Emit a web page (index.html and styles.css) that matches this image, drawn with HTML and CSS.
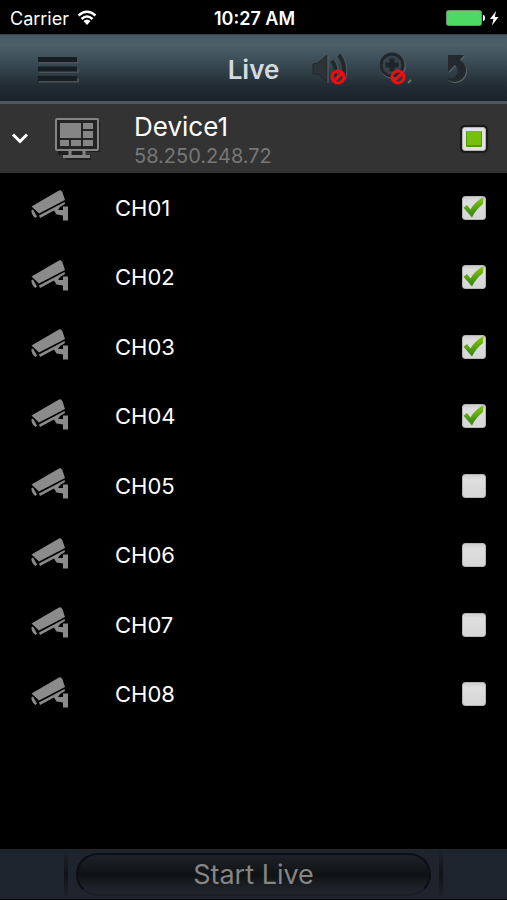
FILE: index.html
```html
<!DOCTYPE html>
<html lang="en">
<head>
    <meta charset="UTF-8">
    <meta name="viewport" content="width=device-width, initial-scale=1.0">
    <title>Live</title>
    <link rel="stylesheet" href="styles.css">
</head>
<body>
    <svg class="defs" aria-hidden="true">
        <defs>
            <linearGradient id="green" x1="0" y1="0" x2="0" y2="1">
                <stop offset="0" stop-color="#8cc811"/>
                <stop offset="1" stop-color="#2f8412"/>
            </linearGradient>
            <symbol id="camera" viewBox="0 0 38 31">
                <path d="M.5 16.500L28 .5Q29.500 -.2 30.500 1L31.500 2.500L34 10L8 23.500Z"/>
                <path d="M.3 20.500L2 19.500L6 26.500L4.500 28Q.8 26 .3 20.500Z"/>
                <path d="M8 25.500L33.500 12L34 14L29 17L27 20H32V16.500H37V30.500H32V25.500L25.500 24.500L23 20.500L9 28Z"/>
            </symbol>
            <symbol id="tick" viewBox="0 0 24 24">
                <path d="M1.500 11.800L5 9L8.500 13.500Q13 5.500 21.500 1L21 8Q14 13.500 10 21.500Z" fill="url(#green)"/>
            </symbol>
            <symbol id="partial" viewBox="0 0 24 24">
                <rect x="4" y="4" width="16" height="16" rx="1" fill="#4d9a12"/>
                <rect x="5" y="4" width="14" height="14" fill="#76bf0c"/>
            </symbol>
            <symbol id="banned" viewBox="0 0 16 16">
                <circle cx="8" cy="8" r="6" fill="none" stroke="#f50d0d" stroke-width="3"/>
                <path d="M4 12L12 4" stroke="#f50d0d" stroke-width="3"/>
            </symbol>
        </defs>
    </svg>

    <div class="status-bar">
        <div class="carrier">
            <span>Carrier</span>
            <svg width="20" height="16" viewBox="0 0 20 16">
                <path d="M1.500 5.500Q10-2 18.500 5.500M4.500 9Q10 4 15.500 9" fill="none" stroke="#fff" stroke-width="2.400"/>
                <path d="M6.500 11Q10 8 13.500 11L10 15Z" fill="#fff"/>
            </svg>
        </div>
        <span class="clock">10:27 AM</span>
        <div class="battery">
            <svg width="53" height="16" viewBox="0 0 53 16">
                <rect x=".5" y=".5" width="35" height="15" rx="2" fill="#4cd964" stroke="#6e8f74"/>
                <path d="M37 5Q39 5 39 8T37 11Z" fill="#fff"/>
                <path d="M50 1L44 9H47.500L46 15.500L52.500 7H48.800Z" fill="#fff"/>
            </svg>
        </div>
    </div>

    <header class="nav-bar">
        <button class="nav-button" aria-label="Menu">
            <svg width="41" height="27" viewBox="0 0 41 27">
                <path d="M1 5.500H41M1 15H41M1 24.500H41" stroke="#4b5358" stroke-width="4"/>
                <path d="M0 3.500H39M0 13H39M0 22.500H39" stroke="#161e24" stroke-width="5"/>
            </svg>
        </button>
        <h1>Live</h1>
        <div class="tools">
            <button class="nav-button" aria-label="Sound">
                <svg width="38" height="34" viewBox="0 0 38 34">
                    <path d="M2 12L7 11L16 3V29L7 22H2Z" fill="#2d3438" stroke="#20272b"/>
                    <path d="M17 3V31" stroke="#5b666b"/>
                    <path d="M22 9Q27 15 25 24M29 3Q37 14 33 27" fill="none" stroke="#525d62" stroke-width="4"/>
                    <path d="M21 9Q26 15 24 24M28 3Q36 14 32 27" fill="none" stroke="#22292d" stroke-width="4"/>
                    <use href="#banned" x="19" y="17" width="16" height="16"/>
                </svg>
            </button>
            <button class="nav-button" aria-label="Zoom">
                <svg width="34" height="34" viewBox="0 0 34 34">
                    <circle cx="13" cy="14" r="11.500" fill="none" stroke="#525d63" stroke-width="3"/>
                    <circle cx="12" cy="13" r="11" fill="#36434a" stroke="#1f272b" stroke-width="3"/>
                    <path d="M12 6.500V19.500M5.500 13H18.500" stroke="#1f262a" stroke-width="5"/>
                    <path d="M28 31L31 28" stroke="#66727a" stroke-width="2"/>
                    <use href="#banned" x="10" y="17" width="16" height="16"/>
                </svg>
            </button>
            <button class="nav-button" aria-label="Back">
                <svg width="24" height="30" viewBox="0 0 24 30">
                    <path d="M3 2H20L16 7Q23 12 22 19Q20 28 11 29Q5 29 2 25Q10 27 13 21Q15 16 11 12L4 19Z" fill="#59646a"/>
                    <path d="M3 1H19L15 6Q22 11 21 18Q19 27 10 28Q4 28 1 24Q9 26 12 20Q14 15 10 11L3 18Z" fill="#23292d"/>
                </svg>
            </button>
        </div>
    </header>

    <main>
        <div class="device">
            <button class="expand" aria-label="Collapse device" onclick="toggleChannels()">
                <svg width="18" height="14" viewBox="0 0 18 14">
                    <path d="M2 2.500L9 9.500L16 2.500" fill="none" stroke="#fff" stroke-width="3"/>
                </svg>
            </button>
            <svg class="monitor" width="45" height="42" viewBox="0 0 45 42">
                <path d="M3 3H45V34H28V37H36V42H11V37H3Z" fill="#202020"/>
                <rect x="1" y="1" width="42" height="31" rx="1" fill="#242424" stroke="#858585" stroke-width="2"/>
                <path d="M5 5H26V20H5ZM28 5H38V11H28ZM28 13H38V20H28ZM5 22H14V28H5ZM16 22H26V28H16ZM28 22H38V28H28Z" fill="#858585"/>
                <path d="M15 33V38M29 33V38M8 38.500H35" stroke="#858585" stroke-width="3"/>
            </svg>
            <label class="device-info" for="allChannels">
                <span class="device-name">Device1</span>
                <span class="device-ip">58.250.248.72</span>
            </label>
            <span class="check">
                <input type="checkbox" id="allChannels" onchange="selectAll()">
                <svg class="mark"><use href="#tick"/></svg>
                <svg class="some"><use href="#partial"/></svg>
            </span>
        </div>
        <ul id="channels"></ul>
    </main>

    <footer class="bottom-bar">
        <div class="start-wrap">
            <button class="start">Start Live</button>
        </div>
    </footer>

    <script>
        let channels = [true, true, true, true, false, false, false, false];
        let list = document.getElementById("channels");
        let allBox = document.getElementById("allChannels");

        function loadChannels() {
            list.innerHTML = "";
            channels.forEach((selected, index) => {
                let item = document.createElement("li");
                let id = "ch" + (index + 1);
                item.innerHTML = `
                    <svg class="camera"><use href="#camera"/></svg>
                    <label for="${id}">CH0${index + 1}</label>
                    <span class="check">
                        <input type="checkbox" id="${id}" ${selected ? "checked" : ""}>
                        <svg class="mark"><use href="#tick"/></svg>
                    </span>`;
                item.querySelector("input").onchange = (e) => {
                    channels[index] = e.target.checked;
                    updateAll();
                };
                list.appendChild(item);
            });
            updateAll();
        }

        function updateAll() {
            let count = channels.filter(c => c).length;
            allBox.checked = count === channels.length;
            allBox.indeterminate = count > 0 && count < channels.length;
        }

        function selectAll() {
            channels = channels.map(() => allBox.checked);
            loadChannels();
        }

        function toggleChannels() {
            list.hidden = !list.hidden;
        }

        loadChannels();
    </script>
</body>
</html>
```

FILE: styles.css
```css
* {
    box-sizing: border-box;
}
body {
    margin: 0;
    min-height: 100vh;
    display: flex;
    flex-direction: column;
    background: #000;
    color: #fff;
    font-family: Inter, "Liberation Sans", sans-serif;
}
button {
    border: none;
    padding: 0;
    background: none;
    font-family: inherit;
    cursor: pointer;
}
svg {
    display: block;
}
.defs {
    position: absolute;
    width: 0;
    height: 0;
}
.status-bar {
    display: grid;
    grid-template-columns: 1fr auto 1fr;
    align-items: center;
    height: 34px;
    padding: 2px 8px 0 10px;
    font-size: 18px;
}
.carrier {
    display: flex;
    align-items: center;
    gap: 8px;
}
.clock {
    font-weight: 600;
}
.battery {
    justify-self: end;
}
.nav-bar {
    display: grid;
    grid-template-columns: 1fr auto 1fr;
    align-items: center;
    height: 70px;
    padding: 2px 38px 0;
    background: linear-gradient(#465963, #4c606a 15%, #34444c 50%, #202a32 80%, #1b222c);
    border-top: 1px solid #33424a;
    border-bottom: 3px double #50585d;
}
.nav-bar h1 {
    margin: 0;
    font-size: 26px;
    font-weight: 600;
    color: #d3dade;
}
.tools {
    display: flex;
    align-items: center;
    justify-content: space-between;
    padding-left: 32px;
}
.nav-button {
    justify-self: start;
}
.device {
    display: flex;
    align-items: center;
    height: 69px;
    padding: 0 21px 0 11px;
    background: #333;
}
.monitor {
    margin-left: 26px;
}
.device-info {
    flex: 1;
    display: flex;
    flex-direction: column;
    padding-top: 2px;
    margin-left: 34px;
}
.device-name {
    font-size: 26px;
    line-height: 32px;
}
.device-ip {
    font-size: 20px;
    line-height: 26px;
    color: #777;
}
#channels {
    display: grid;
    grid-auto-rows: 1fr;
    min-height: 556px;
    margin: 0;
    padding: 0;
    list-style: none;
}
#channels[hidden] {
    display: none;
}
#channels li {
    display: flex;
    align-items: center;
    padding: 0 21px 0 31px;
}
#channels label {
    flex: 1;
    margin-left: 46px;
    font-size: 22px;
}
.camera {
    width: 38px;
    height: 31px;
    margin-bottom: 4px;
    fill: #8b8b8b;
}
.check {
    display: grid;
    width: 24px;
    height: 24px;
}
.check input,
.check svg {
    grid-area: 1 / 1;
    width: 24px;
    height: 24px;
    margin: 0;
}
.check input {
    appearance: none;
    background: linear-gradient(#cfcfcf, #dedede 20%, #d6d6d6);
    border: 1px solid #b5b5b5;
    border-radius: 3px;
    cursor: pointer;
}
.device .check input {
    background: #e2e2e2;
    box-shadow: 0 0 1px 2px #191919;
}
.check svg {
    visibility: hidden;
    pointer-events: none;
}
.check input:checked ~ .mark,
.check input:indeterminate ~ .some {
    visibility: visible;
}
.bottom-bar {
    margin-top: auto;
    height: 51px;
    padding: 0 64px;
    background: #1e242d;
    border-top: 1px solid #24282b;
    border-bottom: 1px solid #06080a;
}
.start-wrap {
    height: 100%;
    padding: 3px 8px;
    border: solid #14181d;
    border-width: 0 4px;
    border-image: linear-gradient(#1e242d, #101317 50%, #1e242d) 1;
}
.start {
    width: 100%;
    height: 43px;
    border: 2px solid #0b0e12;
    border-bottom-color: #191e24;
    border-radius: 22px;
    background: linear-gradient(#1b2128, #171b1f 25%, #0f1213 50%, #1b2026 80%, #1e242c);
    color: #858585;
    font-size: 27px;
}
```
